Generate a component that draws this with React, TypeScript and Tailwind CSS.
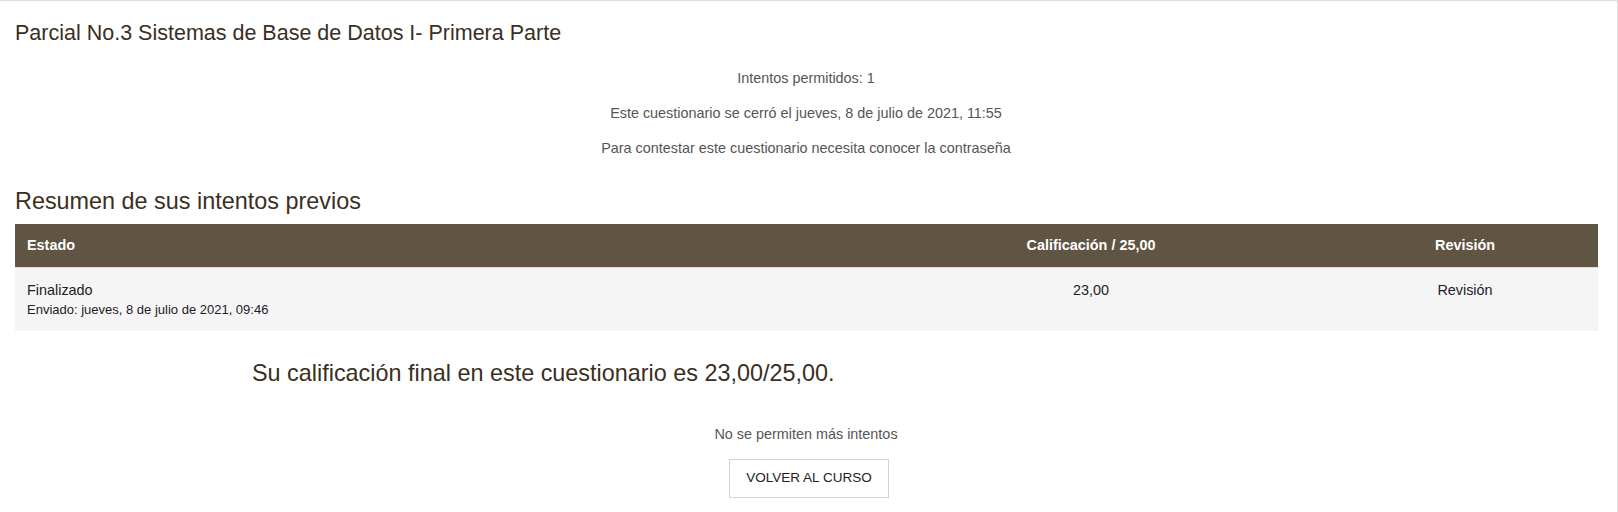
export default function App() {
  return (
    <div
      className="min-h-[512px] w-[1618px] border-t border-r border-[#dedede] bg-white"
      style={{ fontFamily: '"Liberation Sans", Arial, sans-serif' }}
    >
      <div className="pl-[15px] pr-[20px]">
        <h2 className="pt-[20px] text-[21.5px] leading-[25px] text-[#3a2f22]">
          Parcial No.3 Sistemas de Base de Datos I- Primera Parte
        </h2>

        <div className="mt-[21px] flex flex-col items-center gap-[13px] text-[14.4px] leading-[22px] text-[#555555]">
          <p>Intentos permitidos: 1</p>
          <p>Este cuestionario se cerró el jueves, 8 de julio de 2021, 11:55</p>
          <p>Para contestar este cuestionario necesita conocer la contraseña</p>
        </div>

        <h3 className="mt-[28px] text-[23.4px] leading-[28px] text-[#3a2f22]">
          Resumen de sus intentos previos
        </h3>

        <div className="mt-[9px] w-[1583px] text-[14.4px]">
          <div className="grid h-[43px] grid-cols-[835px_482px_1fr] items-center bg-[#605443] font-bold text-white">
            <div className="px-[12px]">Estado</div>
            <div className="text-center">Calificación / 25,00</div>
            <div className="text-center">Revisión</div>
          </div>
          <div className="grid h-[64px] grid-cols-[835px_482px_1fr] border-t border-[#e6dede] bg-[#f5f5f5] pt-[12px] text-[#1d2125]">
            <div className="px-[12px]">
              <div className="leading-[20px]">Finalizado</div>
              <div className="text-[13px] leading-[19px]">Enviado: jueves, 8 de julio de 2021, 09:46</div>
            </div>
            <div className="text-center leading-[20px]">23,00</div>
            <div className="text-center leading-[20px]">Revisión</div>
          </div>
        </div>

        <div className="mt-[28px] pl-[237px] text-[23.4px] leading-[28px] text-[#3a2f22]">
          Su calificación final en este cuestionario es 23,00/25,00.
        </div>

        <div className="mt-[36px] flex flex-col items-center">
          <p className="text-[14.4px] leading-[22px] text-[#555555]">No se permiten más intentos</p>
          <button className="mt-[14px] ml-[6px] h-[39px] w-[160px] border border-[#ced4da] bg-white text-[13.5px] text-[#1d2125]">
            VOLVER AL CURSO
          </button>
        </div>
      </div>
    </div>
  );
}
